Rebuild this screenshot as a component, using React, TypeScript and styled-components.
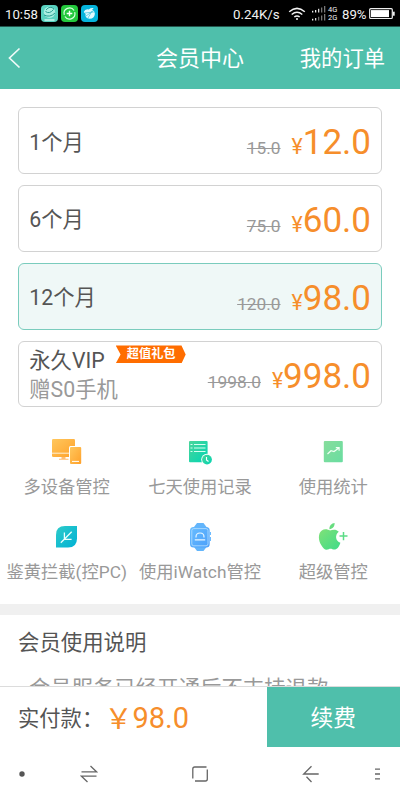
import React from "react";
import styled, { createGlobalStyle } from "styled-components";

const Global = createGlobalStyle`
  * { box-sizing: border-box; }
  body { margin: 0; background: #fff; font-family: Roboto, "Noto Sans CJK SC", sans-serif; }
  svg { display: block; flex: none; }
`;

const Screen = styled.div`
  width: 400px;
  height: 800px;
  overflow: hidden;
  display: flex;
  flex-direction: column;
  background: #fff;
`;

const StatusBar = styled.div`
  height: 27px;
  flex: none;
  display: flex;
  align-items: center;
  padding: 1px 5px 0 5px;
  background: #000;
  border-bottom: 1px solid #23564d;
  color: #f2f2f2;
  font-size: 14px;
  white-space: nowrap;
`;

const Clock = styled.span`
  width: 36px;
  font-size: 13.2px;
  padding-top: 2px;
`;

const Speed = styled.span`
  margin-left: auto;
  margin-right: 8px;
  width: 47px;
  font-size: 13.3px;
  padding-top: 2px;
`;

const Percent = styled.span`
  margin-left: 4px;
  margin-right: 2px;
  width: 25px;
  font-size: 13.2px;
  padding-top: 2px;
`;

const Networks = styled.div`
  display: flex;
  flex-direction: column;
  width: 10px;
  margin-left: 1px;
  font-size: 7.5px;
  line-height: 7.5px;
`;

const StatusApps = styled.div`
  display: flex;
  gap: 3px;
`;

const Header = styled.div`
  height: 62px;
  flex: none;
  display: grid;
  grid-template-columns: 110px 1fr 110px;
  align-items: center;
  background: #4fbfab;
  color: #fff;
  padding: 0 15px 0 7px;
`;

const Title = styled.div`
  font-size: 22px;
  line-height: 32px;
  white-space: nowrap;
  padding: 2px 0 0 39px;
`;

const HeaderLink = styled.div`
  font-size: 21.3px;
  line-height: 32px;
  text-align: right;
  white-space: nowrap;
  padding-top: 2px;
`;

const Content = styled.div`
  height: 597px;
  flex: none;
  overflow: hidden;
`;

const Plans = styled.div`
  display: flex;
  flex-direction: column;
  gap: 11px;
  padding: 18.2px 18px 0;
`;

const Plan = styled.div<{ $selected?: boolean }>`
  height: 66.8px;
  display: flex;
  justify-content: space-between;
  align-items: center;
  padding: 0 10px 0 10.3px;
  border: 1px solid ${(p) => (p.$selected ? "#7accbd" : "#d2d2d2")};
  border-radius: 6px;
  background: ${(p) => (p.$selected ? "#eff8f7" : "#fff")};
`;

const PlanNames = styled.div`
  font-size: 21.3px;
  line-height: 29px;
  color: #555;
  white-space: nowrap;
  padding-top: 3px;
`;

const NameLine = styled.div`
  display: flex;
  align-items: flex-start;
  gap: 11px;
`;

const Gift = styled.div`
  color: #999;
`;

const Ribbon = styled.div`
  width: 70px;
  height: 18px;
  margin-top: -1px;
  background: #ff6d00;
  clip-path: polygon(0 0, 94% 0, 100% 50%, 94% 100%, 0 100%, 7% 50%);
  color: #fff;
  font-size: 12.2px;
  font-weight: 700;
  line-height: 19px;
  text-align: center;
  padding-left: 1px;
`;

const Prices = styled.div`
  display: flex;
  align-items: baseline;
  color: #f68e2b;
  line-height: 42px;
  padding-top: 10.6px;
`;

const OldPrice = styled.span`
  color: #999;
  font-size: 17.3px;
  text-decoration: line-through;
  text-decoration-thickness: 1px;
  margin-right: 11px;
`;

const Yen = styled.span`
  font-size: 21.3px;
`;

const Amount = styled.span`
  font-size: 35px;
`;

const Features = styled.div`
  display: grid;
  grid-template-columns: repeat(3, 1fr);
  grid-auto-rows: 84.5px;
  padding-top: 28.9px;
  height: 196.8px;
`;

const Feature = styled.div`
  display: flex;
  flex-direction: column;
  align-items: center;
  font-size: 17.3px;
  line-height: 26px;
  color: #999;
  white-space: nowrap;
  gap: 6px;
`;

const Divider = styled.div`
  height: 11px;
  background: #f0f0f0;
`;

const Notes = styled.div`
  padding: 12px 18px;
  font-size: 21.4px;
  line-height: 32px;
  white-space: nowrap;
  color: #555;
`;

const Note = styled.div`
  margin-top: 13.5px;
  color: #999;
`;

const PayBar = styled.div`
  height: 61px;
  flex: none;
  display: flex;
  border-top: 1px solid #dcdcdc;
`;

const Total = styled.div`
  flex: 1;
  display: flex;
  align-items: center;
  padding-left: 18px;
  font-size: 21.3px;
  color: #555;
  white-space: nowrap;
`;

const TotalLabel = styled.span`
  width: 86.5px;
  margin-top: -2px;
`;

const TotalAmount = styled.span`
  color: #f68e2b;
  font-size: 29px;
  display: flex;
  align-items: center;
  padding-top: 2px;
`;

const WideYen = styled.span`
  font-family: "Noto Sans CJK SC", sans-serif;
  font-size: 28px;
  width: 28px;
  line-height: 38px;
  margin-top: -3px;
`;

const Renew = styled.button`
  width: 133.5px;
  border: 0;
  padding: 0 0 2px;
  background: #4fbfab;
  color: #fff;
  font: 22.7px Roboto, "Noto Sans CJK SC", sans-serif;
`;

const NavBar = styled.div`
  flex: 1;
  display: grid;
  grid-template-columns: 44.5px 89px 133px 89px 44.5px;
  align-items: center;
  justify-items: center;
`;

const SignalBars = () => (
  <svg width="16" height="15" viewBox="0 0 16 15">
    {[0, 8].map((y) => (
      <g key={y} fill="#eee">
        <rect x="1" y={y + 4.8} width="1.3" height="1.7" />
        <rect x="4" y={y + 4} width="1.3" height="2.5" opacity={y ? 0.9 : 1} />
        <rect x="7" y={y + 2.8} width="1.3" height="3.7" opacity={y ? 0.45 : 0.9} />
        <rect x="10" y={y + 1.5} width="1.3" height="5" opacity=".5" />
        <rect x="13" y={y} width="1.3" height="6.5" opacity=".5" />
      </g>
    ))}
  </svg>
);

const Grad = ({ id, from, to }: { id: string; from: string; to: string }) => (
  <defs>
    <linearGradient id={id} x1="0" y1="0" x2="1" y2="1">
      <stop stopColor={from} />
      <stop offset="1" stopColor={to} />
    </linearGradient>
  </defs>
);

const DevicesIcon = () => (
  <svg width="34" height="32" viewBox="0 0 34 32">
    <Grad id="dev" from="#ffc75d" to="#ffa12a" />
    <rect x="2" y="3" width="23" height="18" rx="1.3" fill="url(#dev)" />
    <path d="M2 17.2H25" stroke="#fff1d6" strokeWidth="1" />
    <path d="M11.5 21h4v1.7h3v1.1H9v-1.1h2.5z" fill="#ffbd72" />
    <rect x="19" y="10" width="13" height="19" rx="1.5" fill="#fff" />
    <rect x="20" y="11" width="11.2" height="17" rx="1" fill="url(#dev)" />
    <path d="M22 25.4h7" stroke="#fff" strokeWidth="1" />
  </svg>
);

const RecordIcon = () => (
  <svg width="34" height="32" viewBox="0 0 34 32">
    <Grad id="rec" from="#4bd59a" to="#00d5b4" />
    <rect x="6" y="5" width="18.6" height="21.2" rx="1" fill="url(#rec)" />
    <path d="M7.5 8.5h2M11 8.5h11.5M7.5 12h2M11 12h11.5M7.5 15.5h2M11 15.5h11.5" stroke="#d6fff1" strokeWidth="1.2" />
    <circle cx="24" cy="23.6" r="5.8" fill="#fff" />
    <circle cx="24" cy="23.6" r="4.9" fill="url(#rec)" />
    <path d="M23.5 21v3l2 1.5" fill="none" stroke="#fff" strokeWidth="1.1" />
  </svg>
);

const ChartIcon = () => (
  <svg width="34" height="32" viewBox="0 0 34 32">
    <Grad id="chart" from="#87dd9c" to="#69dda1" />
    <rect x="7.8" y="5" width="19" height="21.2" rx="1" fill="url(#chart)" />
    <path d="m11.5 18 3.5-3.3 3 .8 4.8-3.4M19.8 11.7h3.3v3" fill="none" stroke="#f1fff4" strokeWidth="1.2" />
  </svg>
);

const LeafIcon = () => (
  <svg width="34" height="32" viewBox="0 0 34 32">
    <Grad id="leaf" from="#2dcbc9" to="#00b1d5" />
    <path d="M6 26.5V13.8Q6 5 15 5H27v12.5q0 9-9 9z" fill="url(#leaf)" />
    <path d="m10.8 21.8 10.9-11M14.4 11.6v6.7h7.2" fill="none" stroke="#eafffd" strokeWidth="1.3" />
  </svg>
);

const WatchIcon = () => (
  <svg width="34" height="32" viewBox="0 0 34 32">
    <Grad id="watch" from="#68bdff" to="#4b9ffa" />
    <path d="m11 6 3-4h6.5l3 4v20l-3 4H14l-3-4z" fill="#63b5fb" />
    <rect x="7" y="6" width="19.7" height="20.5" rx="3.5" fill="url(#watch)" />
    <rect x="8.8" y="7.6" width="16.2" height="17.2" rx="2" fill="none" stroke="#b8e0ff" strokeWidth=".8" />
    <path d="M13 16.4v-.5q0-3.9 4-3.9t4 3.9v.5M11.8 18.9h10.4" fill="none" stroke="#e7f6ff" strokeWidth="1.2" />
    <path d="M27.4 11v3M27.4 16v4" stroke="#66b8ff" strokeWidth="1.1" />
  </svg>
);

const AppleIcon = () => (
  <svg width="34" height="32" viewBox="0 0 34 32">
    <Grad id="apple" from="#80e178" to="#3edb88" />
    <path d="M14 9.6C12 8.2 8.5 7.4 5.8 9.4c-4 3-3.5 9.8-.6 14.6 2.3 4 4.3 5.6 7.5 4.2 1.2-.5 2.4-.5 3.7 0 4 1.5 6.4-1.6 8-6.4-5-1.7-5.8-7.7-1.6-11-2.2-2.6-5.8-2.6-8.8-1.2z" fill="url(#apple)" />
    <path d="M13.4 8.2c-.1-3.7 2.2-5.8 5.2-6.2.2 3.4-1.9 5.9-5.2 6.2z" fill="#67dd7f" />
    <path d="M23.5 15.1h8M27.5 11v8.2" stroke="#5bdc86" strokeWidth="1.5" />
  </svg>
);

const plans = [
  { name: "1个月", old: "15.0", price: "12.0" },
  { name: "6个月", old: "75.0", price: "60.0" },
  { name: "12个月", old: "120.0", price: "98.0", selected: true },
  { name: "永久VIP", old: "1998.0", price: "998.0", tag: "超值礼包", gift: "赠S0手机" },
];

const features = [
  { label: "多设备管控", Icon: DevicesIcon },
  { label: "七天使用记录", Icon: RecordIcon },
  { label: "使用统计", Icon: ChartIcon },
  { label: "鉴黄拦截(控PC)", Icon: LeafIcon },
  { label: "使用iWatch管控", Icon: WatchIcon },
  { label: "超级管控", Icon: AppleIcon },
];

export default function App() {
  return (
    <Screen>
      <Global />
      <StatusBar>
        <Clock>10:58</Clock>
        <StatusApps>
          <svg width="17" height="17" viewBox="0 0 17 17">
            <rect width="17" height="17" rx="4" fill="#59d2c0" />
            <circle cx="8.5" cy="7.3" r="5.7" fill="#a9eee1" />
            <path d="M4.5 6.5q4 3 8-2M5 5q4-5 8-1M3 10q6 3 11-2" fill="none" stroke="#299e93" strokeWidth="1" />
            <path d="M3.5 15h10" stroke="#dffbf5" strokeWidth="1.3" />
          </svg>
          <svg width="17" height="17" viewBox="0 0 17 17">
            <rect width="17" height="17" rx="4" fill="#23c83c" />
            <path d="M13.1 5.5A5.4 5.4 0 0 0 3.3 9.8M3.9 11.5a5.4 5.4 0 0 0 9.8-4.3" fill="none" stroke="#d9ffe0" strokeWidth="1.2" />
            <path d="M5.7 8.5h5.6M8.5 5.7v5.6" stroke="#fff" strokeWidth="1.4" />
          </svg>
          <svg width="17" height="17" viewBox="0 0 17 17">
            <rect width="17" height="17" rx="4" fill="#05b4dc" />
            <path d="M2.7 7q1.5-3.6 5-2.6 2.5-1.8 5-1.2l-1.6 1.6q2.6 1.2 2.8 3.9-.5 5-5.3 5-5-.7-4-4.7z" fill="#e2faff" />
            <path d="m3.8 8 9-1M5 11l7-5M7 13l4-7" stroke="#4cc6e0" strokeWidth=".8" />
          </svg>
        </StatusApps>
        <Speed>0.24K/s</Speed>
        <svg width="18" height="14" viewBox="0 0 18 14" fill="none" stroke="#f2f2f2" strokeWidth="1.5">
          <path d="M1.2 4.7Q9-2 16.8 4.7M3.7 7.5q5.3-4.4 10.6 0M6.3 10q2.7-2.2 5.4 0" />
          <circle cx="9" cy="12" r="1" fill="#f2f2f2" stroke="none" />
        </svg>
        <svg width="5" height="1" />
        <SignalBars />
        <Networks>
          <span>4G</span>
          <span>2G</span>
        </Networks>
        <Percent>89%</Percent>
        <svg width="26" height="12" viewBox="0 0 26 12">
          <rect x=".7" y=".7" width="22.6" height="9.8" rx="1" fill="none" stroke="#eee" strokeWidth="1.2" />
          <rect x="2" y="2.1" width="18" height="7" fill="#fff" />
          <rect x="24" y="3.7" width="1.7" height="4" fill="#eee" />
        </svg>
      </StatusBar>
      <Header>
        <svg width="16" height="22" viewBox="0 0 16 22" fill="none" stroke="#effaf8" strokeWidth="1.7">
          <path d="M12.5 1.5 2.5 11l10 9.5" />
        </svg>
        <Title>会员中心</Title>
        <HeaderLink>我的订单</HeaderLink>
      </Header>
      <Content>
        <Plans>
          {plans.map((p) => (
            <Plan key={p.name} $selected={p.selected}>
              <PlanNames>
                <NameLine>
                  {p.name}
                  {p.tag && <Ribbon>{p.tag}</Ribbon>}
                </NameLine>
                {p.gift && <Gift>{p.gift}</Gift>}
              </PlanNames>
              <Prices>
                <OldPrice>{p.old}</OldPrice>
                <Yen>¥</Yen>
                <Amount>{p.price}</Amount>
              </Prices>
            </Plan>
          ))}
        </Plans>
        <Features>
          {features.map(({ label, Icon }) => (
            <Feature key={label}>
              <Icon />
              {label}
            </Feature>
          ))}
        </Features>
        <Divider />
        <Notes>
          会员使用说明
          <Note>· 会员服务已经开通后不支持退款</Note>
        </Notes>
      </Content>
      <PayBar>
        <Total>
          <TotalLabel>实付款：</TotalLabel>
          <TotalAmount>
            <WideYen>￥</WideYen>98.0
          </TotalAmount>
        </Total>
        <Renew>续费</Renew>
      </PayBar>
      <NavBar>
        <svg width="6" height="6" viewBox="0 0 6 6">
          <circle cx="3" cy="3" r="2.7" fill="#555" />
        </svg>
        <svg width="18" height="18" viewBox="0 0 18 18" fill="none" stroke="#666" strokeWidth="1.3">
          <path d="M1.5 6.8h15L10.5 1M16.5 11.2H1.5l6 5.8" />
        </svg>
        <svg width="18" height="18" viewBox="0 0 18 18" fill="none" stroke="#666" strokeWidth="1.3">
          <path d="M4 16H14.5Q16.3 16 16.3 14V4.5M15.5 2H3.7Q1.8 2 1.8 4V13.5" />
        </svg>
        <svg width="18" height="18" viewBox="0 0 18 18" fill="none" stroke="#666" strokeWidth="1.3">
          <path d="M9.5 1.2 1.7 9h15M4.5 11.8 9.5 17" />
        </svg>
        <svg width="7" height="12" viewBox="0 0 7 12" stroke="#666" strokeWidth="1.3">
          <path d="M1 1.2h5M1 6h5M1 10.8h5" />
        </svg>
      </NavBar>
    </Screen>
  );
}
